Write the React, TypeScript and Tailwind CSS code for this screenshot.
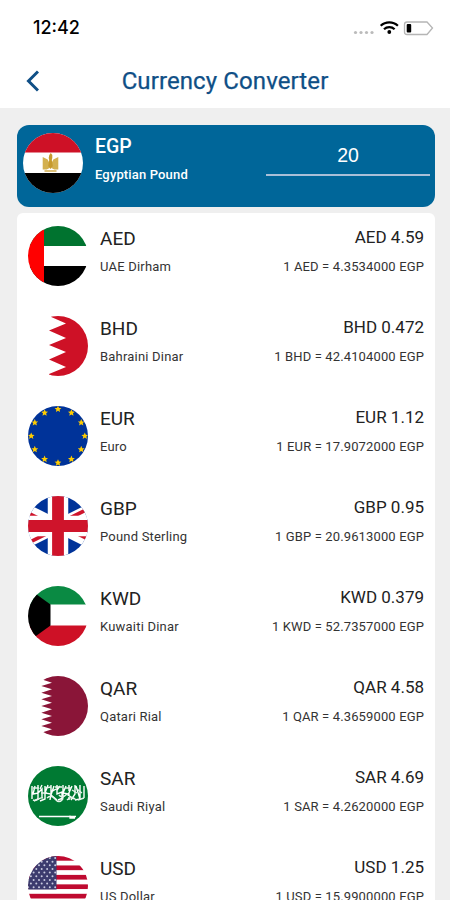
import { ReactNode, useState } from 'react';

type Rate = { code: string; name: string; amount: string; rate: string };

const rates: Rate[] = [
  { code: 'AED', name: 'UAE Dirham', amount: '4.59', rate: '4.3534000' },
  { code: 'BHD', name: 'Bahraini Dinar', amount: '0.472', rate: '42.4104000' },
  { code: 'EUR', name: 'Euro', amount: '1.12', rate: '17.9072000' },
  { code: 'GBP', name: 'Pound Sterling', amount: '0.95', rate: '20.9613000' },
  { code: 'KWD', name: 'Kuwaiti Dinar', amount: '0.379', rate: '52.7357000' },
  { code: 'QAR', name: 'Qatari Rial', amount: '4.58', rate: '4.3659000' },
  { code: 'SAR', name: 'Saudi Riyal', amount: '4.69', rate: '4.2620000' },
  { code: 'USD', name: 'US Dollar', amount: '1.25', rate: '15.9900000' },
];

const STAR = '0,-3 0.85,-1 2.85,-0.93 1.3,0.4 1.76,2.43 0,1.35 -1.76,2.43 -1.3,0.4 -2.85,-0.93 -0.85,-1';

// every flag is drawn on a 60x60 square and clipped to a circle
const flags: Record<string, ReactNode> = {
  EGP: (
    <>
      <rect width="60" height="60" fill="#fff" />
      <rect width="60" height="19.5" fill="#ce1126" />
      <rect y="40" width="60" height="20" fill="#000" />
      <path d="M19.700 24l5 2.500 2 4v4.500l-3 1.500h-4zM35.300 24l-5 2.500-2 4v4.500l3 1.500h4z" fill="#d3b04f" />
      <path d="M26.300 22l1.500-2 1.500 2v3l-.5 2 1 6-2.300 3-2.300-3 1-6-.5-2z" fill="#c79a2c" />
      <path d="M21.500 38h12" stroke="#dcc078" strokeWidth="1.800" />
    </>
  ),
  AED: (
    <>
      <rect width="60" height="60" fill="#fff" />
      <rect width="60" height="20" fill="#00732f" />
      <rect y="40" width="60" height="20" fill="#000" />
      <rect width="16" height="60" fill="#f00" />
    </>
  ),
  BHD: (
    <>
      <rect width="60" height="60" fill="#fff" />
      <path d="M60 0H21L38 7.500 21 14.500 38 22 21 29 38 36 21 43.500 38 51 21 58V60H60z" fill="#ce1126" />
    </>
  ),
  EUR: (
    <>
      <rect width="60" height="60" fill="#039" />
      {Array.from({ length: 12 }, (_, i) => (
        <polygon
          key={i}
          points={STAR}
          fill="#fc0"
          transform={`translate(${30 + 26.8 * Math.sin((i * Math.PI) / 6)} ${30 - 26.8 * Math.cos((i * Math.PI) / 6)}) scale(1.2)`}
        />
      ))}
    </>
  ),
  GBP: (
    <>
      <rect width="60" height="60" fill="#039" />
      <path d="M-20 5L80 55M80 5L-20 55" stroke="#fff" strokeWidth="12.600" />
      <path d="M30 32L-20 7M30 28L80 53M30 28L80 3M30 32L-20 57" stroke="#cf142b" strokeWidth="3.800" />
      <path d="M30 0V60M0 30H60" stroke="#fff" strokeWidth="20.500" />
      <path d="M30 0V60M0 30H60" stroke="#cf142b" strokeWidth="11.800" />
    </>
  ),
  KWD: (
    <>
      <rect width="60" height="60" fill="#fff" />
      <rect width="60" height="18.500" fill="#0a8a43" />
      <rect y="39.500" width="60" height="21" fill="#ce1126" />
      <path d="M-3 0L22.500 18.500V39.500L-3 58z" fill="#000" />
    </>
  ),
  QAR: (
    <>
      <rect width="60" height="60" fill="#fff" />
      <path
        d="M60 0H24L13.300 3.300 24 6.700 13.300 10 24 13.300 13.300 16.700 24 20 13.300 23.300 24 26.700 13.300 30 24 33.300 13.300 36.700 24 40 13.300 43.300 24 46.700 13.300 50 24 53.300 13.300 56.700 24 60H60z"
        fill="#8a1538"
      />
    </>
  ),
  SAR: (
    <>
      <rect width="60" height="60" fill="#007a33" />
      <path
        d="M4 20v13M7 20l-2 8 5-1v6l-4 2M10 19v8l4-4v9M14 19l-2 4M17 20v13l-5 2M20 19l-3 8 6 1-1 6M23 19v7l5-3M26 20l-3 9 6 5M29 19v9l5-2v8M32 20l-3 4M35 19v13l-5 2M38 20l-3 7 6 1v6M41 19v6M44 20l-4 9 6 4M47 19v9l-4 6M48 20l4 13M52 19v14l-5 1M56 20v12"
        fill="none"
        stroke="#fff"
        strokeWidth="1.400"
      />
      <path
        d="M5 22h6M5 34c4 2 6-3 10-2M17 22l6-1M19 32q4-4 8 1t8 0M27 21h7M31 29q3 4 8-1M39 34q5-5 9 0M37 22h6M49 23l5 4M50 34l6-2M13 27h6M44 24l5 3"
        fill="none"
        stroke="#e6f3ea"
        strokeWidth="1.400"
      />
      <path d="M11 50.500H48M42 49.500v2.500h5" stroke="#fff" strokeWidth="1.300" fill="none" />
    </>
  ),
  USD: (
    <>
      <rect width="60" height="60" fill="#fff" />
      {Array.from({ length: 7 }, (_, i) => (
        <rect key={i} y={i * 9.45} width="60" height="4.700" fill="#bf0a30" />
      ))}
      <rect width="28.500" height="33.500" fill="#3c3b6e" />
      {Array.from({ length: 9 }, (_, r) =>
        Array.from({ length: 6 }, (_, c) => (
          <circle key={`${r}-${c}`} cx={(r % 2 ? -2.5 : 0.2) + c * 5.4} cy={2 + r * 3.65} r="1" fill="#c9cae0" />
        ))
      )}
    </>
  ),
};

function Flag({ code }: { code: string }) {
  return (
    <svg viewBox="0 0 60 60" className="h-15 w-15 shrink-0 rounded-full">
      {flags[code]}
    </svg>
  );
}

function StatusBar() {
  return (
    <div className="flex h-14 items-center justify-between pl-[33px] pr-[15px]">
      <span className="font-[Inter,sans-serif] text-[18px] font-medium leading-none text-black">12:42</span>
      <svg width="82" height="20" viewBox="0 0 82 20">
        <g fill="#bbb">
          <circle cx="2.500" cy="14.500" r="1.600" />
          <circle cx="8" cy="14.500" r="1.600" />
          <circle cx="13.500" cy="14.500" r="1.600" />
          <circle cx="19" cy="14.500" r="1.600" />
        </g>
        <g fill="none" stroke="#000" strokeWidth="2.200">
          <path d="M27.700 7.800a12.400 12.400 0 0 1 17.200 0" />
          <path d="M31 11.200a7.600 7.600 0 0 1 10.600 0" />
        </g>
        <circle cx="36.300" cy="14" r="1.900" />
        <path
          d="M54 4H74L79.500 10 74 16.500H54Q51.500 16.500 51.500 14V6.500Q51.500 4 54 4z"
          fill="#fff"
          stroke="#b5b5b5"
          strokeWidth="1.300"
        />
        <rect x="53.700" y="6" width="4.500" height="8.500" rx="1" />
      </svg>
    </div>
  );
}

function RateRow({ code, name, amount, rate }: Rate) {
  return (
    <div className="flex h-[90px] items-start px-[11px] pt-[13px]">
      <Flag code={code} />
      <div className="ml-3 flex-1 pt-[3px]">
        <div className="text-[19px] leading-5 text-[#222]">{code}</div>
        <div className="mt-2.5 text-[13px] leading-4 tracking-[0.2px] text-[#333]">{name}</div>
      </div>
      <div className="pt-px text-right">
        <div className="text-[17px] leading-5 text-[#222]">
          {code} {amount}
        </div>
        <div className="mt-3 text-[13px] leading-4 tracking-[0.13px] text-[#333]">
          1 {code} = {rate} EGP
        </div>
      </div>
    </div>
  );
}

export default function App() {
  const [amount, setAmount] = useState('20');

  return (
    <div className="flex h-[900px] w-[450px] flex-col overflow-hidden bg-[#efefef] font-[Roboto,sans-serif]">
      <header className="h-[108px] shrink-0 bg-white">
        <StatusBar />
        <div className="flex h-[50px] items-center justify-center">
          <button className="-ml-[97px] mr-[83px] w-[14px]" aria-label="Back">
            <svg width="14" height="22" viewBox="0 0 14 22" fill="none" stroke="#0f4f86" strokeWidth="3">
              <path d="M13 1.500L3.500 11 13 20.500" />
            </svg>
          </button>
          <h1 className="text-[24px] tracking-[0.1px] text-[#0f4f86] [-webkit-text-stroke:0.25px_#0f4f86]">
            Currency Converter
          </h1>
        </div>
      </header>

      <main className="pl-[17px] pr-[15px] pt-[17px]">
        <section className="flex h-[82px] items-start rounded-xl bg-[#006699] pl-[6px] pr-[5px] pt-2 text-white">
          <Flag code="EGP" />
          <div className="ml-3 flex-1 pt-1">
            <div className="text-[19.5px] font-medium leading-5">EGP</div>
            <div className="mt-2.5 text-[13px] font-medium leading-4 tracking-[0.15px]">Egyptian Pound</div>
          </div>
          <input
            className="h-[43px] w-[164px] border-b-2 border-[#a9bfd8] pt-[3px] text-center font-['Liberation_Sans',sans-serif] text-[19.5px] outline-none"
            value={amount}
            onChange={(e) => setAmount(e.target.value)}
          />
        </section>

        <section className="mt-[6px] rounded-t-md bg-white">
          {rates.map((r) => (
            <RateRow key={r.code} {...r} />
          ))}
        </section>
      </main>
    </div>
  );
}
